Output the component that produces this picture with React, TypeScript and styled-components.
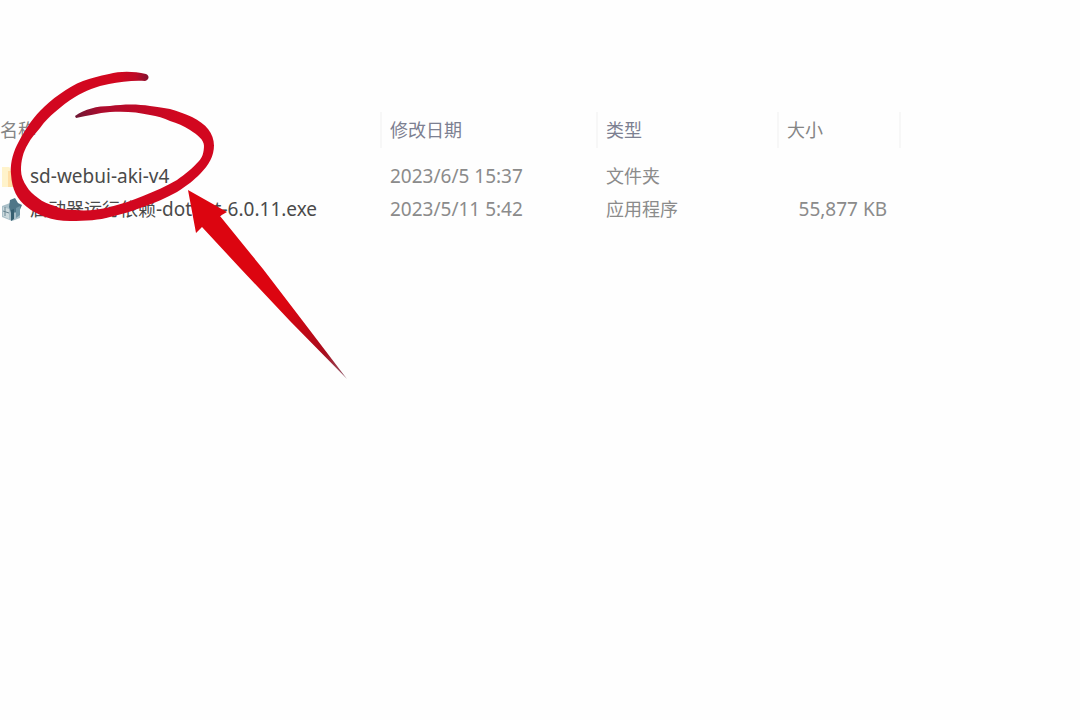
import React from 'react';
import styled, { createGlobalStyle } from 'styled-components';

const GlobalStyle = createGlobalStyle`
  body {
    margin: 0;
    background: #fefefe;
    font-family: "Noto Sans", "Noto Sans CJK SC", sans-serif;
  }
`;

const Page = styled.main`
  position: relative;
  min-height: 100vh;
  padding-top: 112px;
  box-sizing: border-box;
  overflow: hidden;
`;

const FileTable = styled.table`
  width: 900px;
  table-layout: fixed;
  border-collapse: collapse;
  color: #8b8b8b;
`;

const Column = styled.col<{ $width: number }>`
  width: ${(p) => p.$width}px;
`;

const HeaderCell = styled.th<{ $first?: boolean; $tinted?: boolean }>`
  height: 36px;
  padding: 0 0 0 ${(p) => (p.$first ? 0 : 8)}px;
  border-right: 2px solid #f7f7f7;
  color: ${(p) => (p.$tinted ? '#7c8091' : '#858585')};
  font-size: 18px;
  font-weight: 400;
  line-height: 36px;
  text-align: left;
`;

const Body = styled.tbody`
  &::before {
    content: '';
    display: block;
    height: 12px;
  }
`;

const Cell = styled.td<{ $latin?: boolean; $end?: boolean }>`
  height: 33px;
  padding: 0 ${(p) => (p.$end ? 13 : 0)}px 0 9px;
  font-size: ${(p) => (p.$latin ? 19 : 18)}px;
  line-height: 33px;
  text-align: ${(p) => (p.$end ? 'right' : 'left')};
  white-space: nowrap;
`;

const NameCell = styled(Cell)`
  padding: 0;
  color: #4a4a4a;
`;

const Name = styled.div`
  display: flex;
  align-items: center;
  gap: 6px;
  height: 33px;
  font-size: 19px;
`;

const Prefix = styled.span`
  font-size: 18px;
`;

const Icon = styled.svg`
  width: 24px;
  height: 26px;
  flex: none;
`;

const Markup = styled.svg`
  position: absolute;
  top: 0;
  left: 0;
  width: 360px;
  height: 400px;
  pointer-events: none;
`;

const FolderIcon = () => (
  <Icon viewBox="0 0 24 26" aria-hidden="true">
    <path d="M2 3h7l3 3h7v17H2z" fill="#fff3cb" />
    <path d="M8 7h11v16H8z" fill="#ffdfa6" />
  </Icon>
);

const InstallerIcon = () => (
  <Icon viewBox="0 0 24 26" aria-hidden="true">
    <path d="M2 9l8-3 10 3v12l-8 3-10-4z" fill="#a9bfc8" />
    <path d="M10 3l5-2 3 5 4 2-3 7-8 1-2-6z" fill="#4f7688" />
    <path d="M3 10l6 2v10l-6-3z" fill="#cbd9dd" />
    <path d="M11 13l3-1v10l-3 2z" fill="#365e70" />
    <path d="M16 11l4-2v9l-4 3z" fill="#6f95a5" />
    <path d="M3 14l6 2M5 10v9" stroke="#698592" strokeWidth="1" fill="none" />
  </Icon>
);

const files = [
  { prefix: '', name: 'sd-webui-aki-v4', date: '2023/6/5 15:37', type: '文件夹', size: '', icon: <FolderIcon /> },
  {
    prefix: '启动器运行依赖',
    name: '-dotnet-6.0.11.exe',
    date: '2023/5/11 5:42',
    type: '应用程序',
    size: '55,877 KB',
    icon: <InstallerIcon />,
  },
];

const Annotation = () => (
  <Markup viewBox="0 0 360 400" aria-hidden="true">
    <defs>
      <linearGradient id="tail" gradientUnits="userSpaceOnUse" x1="190" y1="192" x2="347" y2="379">
        <stop offset="0" stopColor="#dc0510" />
        <stop offset="0.6" stopColor="#dc0510" />
        <stop offset="0.86" stopColor="#a80c1c" />
        <stop offset="1" stopColor="#906070" />
      </linearGradient>
      <linearGradient id="ring" gradientUnits="userSpaceOnUse" x1="75" y1="0" x2="180" y2="0">
        <stop offset="0" stopColor="#6c1834" />
        <stop offset="0.25" stopColor="#ad0c2e" />
        <stop offset="1" stopColor="#d2071f" />
      </linearGradient>
      <radialGradient id="loop" gradientUnits="userSpaceOnUse" cx="149" cy="77" r="32">
        <stop offset="0" stopColor="#7c1230" />
        <stop offset="0.4" stopColor="#bd0926" />
        <stop offset="1" stopColor="#d2071f" />
      </radialGradient>
    </defs>
    <path
      d="M146 74C133 71 120 71 109 74C99 76 91 78 83 81C75 84 67 89 60 94C52 99 46 105 40 111C32 119 23 133 17 145C12 155 10 166 11 174C12 190 17 199 27 207C37 215 52 221 70 221C86 221 100 220 110 217C122 214 133 211 143 207C155 203 166 198 177 192C188 185 194 180 200 174C209 165 214 156 214 145L204 145C204 153 202 158 199 161C192 169 185 174 177 180C167 186 155 191 143 196C133 200 122 204 110 207C98 210 87 211 75 210C67 210 61 209 55 206C48 204 43 202 38 198C33 194 29 191 27 187C23 181 21 176 21 170C21 161 23 152 28 144C31 138 35 134 40 128C45 121 50 116 55 112C62 106 68 101 75 97C85 91 97 86 109 84C120 82 134 80 145 81C149 80 150 76 146 74Z"
      fill="url(#loop)"
    />
    <path
      d="M75 116C85 109 97 106 110 106C124 104 138 104 150 106C158 107 164 108 170 109C178 111 185 114 192 117C206 124 214 133 214 146L204 146C204 140 198 135 190 130C184 126 177 123 170 121C164 118 157 116 150 115C138 112 124 111 110 112C98 113 87 116 76 118Z"
      fill="url(#ring)"
    />
    <path d="M188 190L227 212L220 216L263 269L302 320L347 379L290 321L240 268L202 227L196 233Z" fill="url(#tail)" />
  </Markup>
);

export default function App() {
  return (
    <>
      <GlobalStyle />
      <Page>
        <FileTable>
          <colgroup>
            <Column $width={381} />
            <Column $width={216} />
            <Column $width={181} />
            <Column $width={122} />
          </colgroup>
          <thead>
            <tr>
              <HeaderCell scope="col" $first>名称</HeaderCell>
              <HeaderCell scope="col" $tinted>修改日期</HeaderCell>
              <HeaderCell scope="col" $tinted>类型</HeaderCell>
              <HeaderCell scope="col">大小</HeaderCell>
            </tr>
          </thead>
          <Body>
            {files.map((file) => (
              <tr key={file.name}>
                <NameCell>
                  <Name>
                    {file.icon}
                    <span>
                      {file.prefix && <Prefix>{file.prefix}</Prefix>}
                      {file.name}
                    </span>
                  </Name>
                </NameCell>
                <Cell $latin>{file.date}</Cell>
                <Cell>{file.type}</Cell>
                <Cell $latin $end>{file.size}</Cell>
              </tr>
            ))}
          </Body>
        </FileTable>
        <Annotation />
      </Page>
    </>
  );
}
